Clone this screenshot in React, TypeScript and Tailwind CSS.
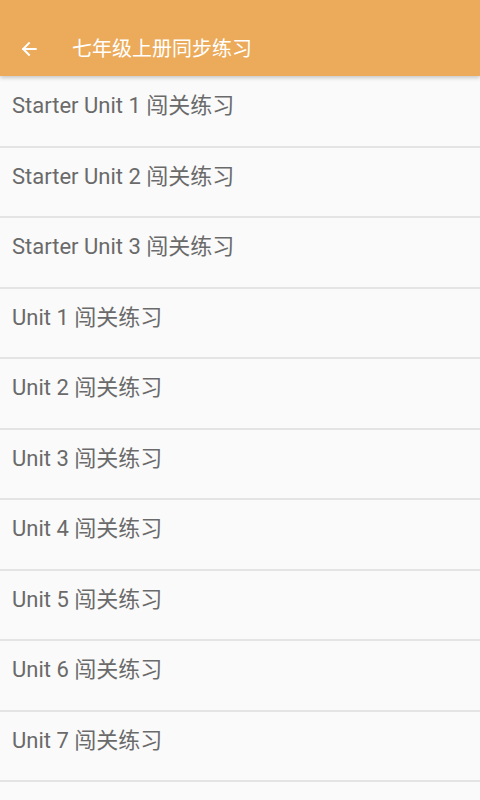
import React from "react";

const items = [
  "Starter Unit 1 闯关练习",
  "Starter Unit 2 闯关练习",
  "Starter Unit 3 闯关练习",
  "Unit 1 闯关练习",
  "Unit 2 闯关练习",
  "Unit 3 闯关练习",
  "Unit 4 闯关练习",
  "Unit 5 闯关练习",
  "Unit 6 闯关练习",
  "Unit 7 闯关练习",
];

const App = () => {
  return (
    <div
      className="w-[480px] h-[800px] overflow-hidden bg-[#fafafa]"
      style={{ fontFamily: 'Roboto, "Noto Sans CJK SC", sans-serif' }}
    >
      <div className="relative z-10 h-[76px] bg-[#ecab5a] flex items-center pt-[22px] shadow-[0_2px_4px_rgba(0,0,0,0.2)]">
        <svg
          className="ml-[19px] w-[20px] h-[20px]"
          viewBox="0 0 24 24"
          fill="none"
          stroke="white"
          strokeWidth="2.4"
          strokeLinecap="square"
        >
          <path d="M20 12H5M12 5l-7 7 7 7" />
        </svg>
        <span className="ml-[33px] text-[20px] text-white">七年级上册同步练习</span>
      </div>
      <div className="flex flex-col pt-[1px]">
        {items.map((t) => (
          <div key={t} className="h-[70.5px] shrink-0 border-b-2 border-[#e4e4e4] pl-[12px] pt-[14px]">
            <span className="text-[22px] leading-[30px] text-[#6a6a6a]">{t}</span>
          </div>
        ))}
      </div>
    </div>
  );
};

export default App;
